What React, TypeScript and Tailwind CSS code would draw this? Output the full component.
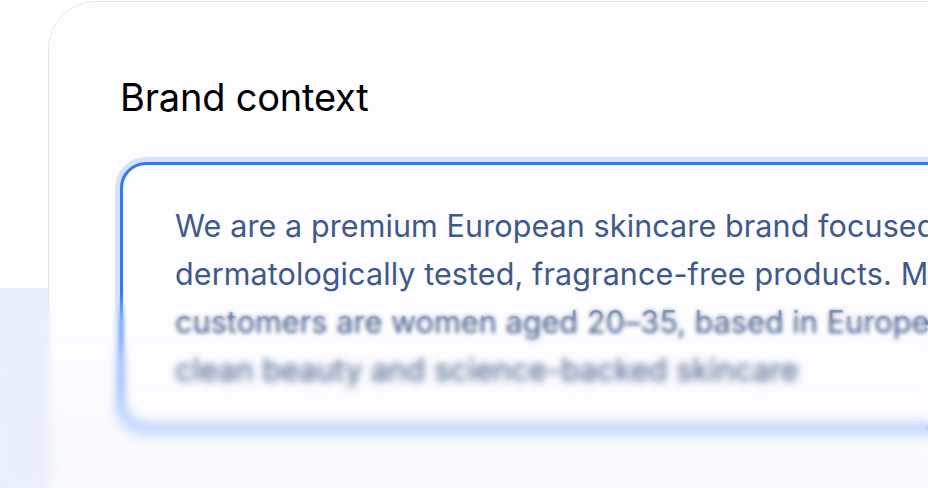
import React from "react";

const lines = [
  "We are a premium European skincare brand focused on",
  "dermatologically tested, fragrance-free products. Most of our",
  "customers are women aged 20–35, based in Europe, who value",
  "clean beauty and science-backed skincare",
];

export default function App() {
  return (
    <div className="relative flex h-[488px] w-[928px] overflow-hidden bg-white font-['Inter',sans-serif]">
      <div className="flex w-[48px] shrink-0 flex-col">
        <div className="h-[288px] bg-white" />
        <div className="flex-1 bg-[#e9effc]" />
      </div>
      <div className="mt-[1px] h-[560px] w-[1000px] shrink-0 rounded-tl-[48px] border border-[#e6e6e8] bg-[linear-gradient(to_bottom,#fdfcff_62%,#f8f9fe_88%)] pl-[71px] pt-[72px]">
        <h2 className="text-[38px] leading-[46px] font-normal tracking-[-0.2px] text-black">Brand context</h2>
        <div className="mt-[42px] w-[1000px] rounded-[26px] border-[3px] border-[#3478f6] bg-[#fdfcff] pb-[32px] pl-[52px] pt-[37px] shadow-[0_0_0_5px_#d6e3fc]">
          {lines.map((l, i) => (
            <div key={i} className="whitespace-nowrap text-[30.5px] leading-[48px] tracking-[0.1px] text-[#3d5a88]">
              {l}
            </div>
          ))}
        </div>
      </div>
      <div className="pointer-events-none absolute inset-x-0 bottom-0 top-[292px] backdrop-blur-[2px] [mask-image:linear-gradient(to_bottom,transparent,black_30px)]" />
      <div className="pointer-events-none absolute inset-x-0 bottom-0 top-[335px] backdrop-blur-[3px] [mask-image:linear-gradient(to_bottom,transparent,black_30px)]" />
      <div className="pointer-events-none absolute inset-x-0 bottom-0 top-[380px] backdrop-blur-[4px] [mask-image:linear-gradient(to_bottom,transparent,black_30px)]" />
      <div className="pointer-events-none absolute inset-x-0 bottom-0 top-[405px] backdrop-blur-[4px] [mask-image:linear-gradient(to_bottom,transparent,black_25px)]" />
    </div>
  );
}
